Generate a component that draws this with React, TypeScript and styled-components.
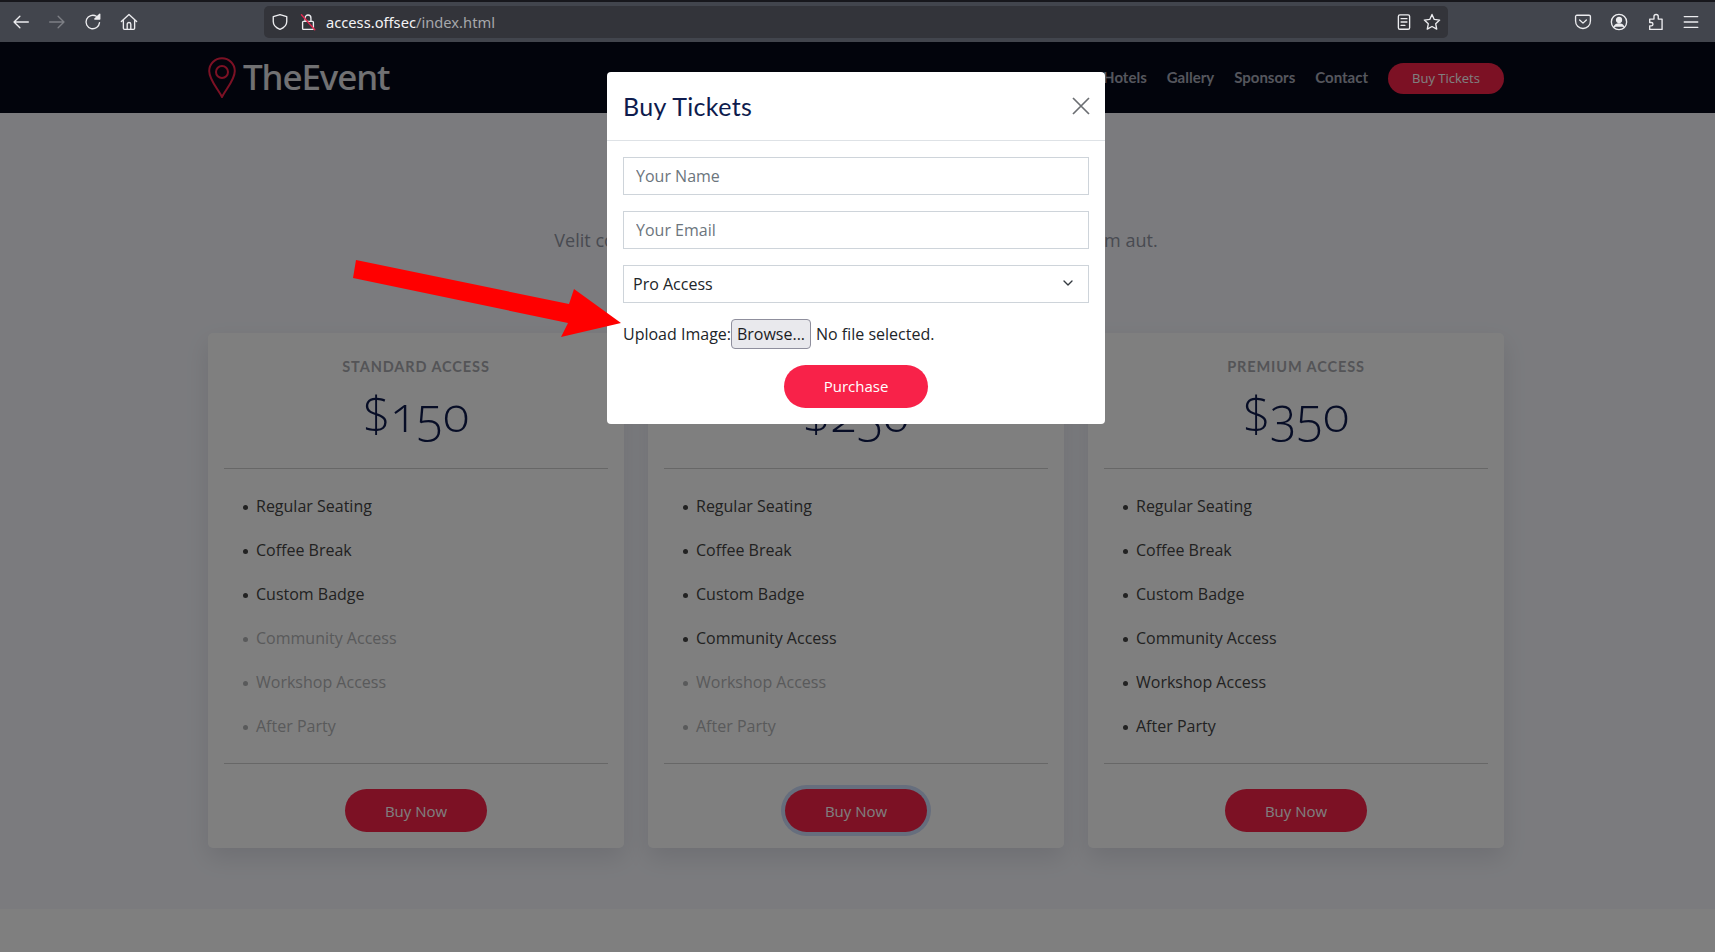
import React from "react";
import styled, { createGlobalStyle } from "styled-components";
import { ChevronDown } from "lucide-react";

const Global = createGlobalStyle`
  html, body { margin: 0; padding: 0; height: 952px; overflow: hidden; background: #fff; }
  body { font-family: "Open Sans", "Liberation Sans", sans-serif; font-size: 16px; color: #444; }
  * { box-sizing: border-box; }
`;

const Shell = styled.div`
  position: relative;
  width: 1715px;
  height: 952px;
  overflow: hidden;
`;

const Toolbar = styled.div`
  height: 42px;
  background: #42454d;
  border-top: 2px solid #17171c;
  display: flex;
  align-items: center;
  padding: 0 7px 0 3px;
`;

const ToolButton = styled.span<{ $w?: number }>`
  width: ${(p) => p.$w ?? 36}px;
  height: 32px;
  display: flex;
  align-items: center;
  justify-content: center;
  flex: none;
`;

const NavGroup = styled.div`
  display: flex;
  width: 261px;
  flex: none;
`;

const UrlBar = styled.div`
  width: 1184px;
  height: 32px;
  background: #33343a;
  border-radius: 5px;
  display: flex;
  align-items: center;
  padding: 0 2px 0 6px;
  flex: none;
`;

const UrlText = styled.div`
  font-family: "Noto Sans", "Open Sans", sans-serif;
  font-size: 14.7px;
  color: #f3f3f5;
  flex: 1;
`;

const UrlDim = styled.span`
  color: #a6a7ab;
`;

const RightGroup = styled.div`
  display: flex;
  margin-left: auto;
`;

const Glyph = styled.svg<{ $dim?: boolean }>`
  width: 18px;
  height: 18px;
  fill: none;
  stroke: ${(p) => (p.$dim ? "#7d7f85" : "#ececef")};
  stroke-width: 1.2;
  stroke-linecap: round;
  stroke-linejoin: round;
`;

const Page = styled.div`
  position: relative;
  height: 910px;
  width: 1715px;
`;

const Header = styled.header`
  height: 71px;
  background: #040919;
  display: flex;
  justify-content: center;
  padding-right: 3px;
`;

const Container = styled.div`
  width: 1296px;
  display: flex;
  align-items: center;
  justify-content: space-between;
`;

const Brand = styled.div`
  display: flex;
  align-items: center;
  gap: 7px;
`;

const BrandName = styled.span`
  font-family: "Noto Sans", sans-serif;
  font-size: 35px;
  font-weight: 500;
  line-height: 44px;
  letter-spacing: -1.1px;
  color: #e2e2e6;
  margin-top: -2px;
`;

const Nav = styled.nav`
  display: flex;
  align-items: center;
  gap: 20px;
`;

const NavLink = styled.a`
  font-family: "Lato", sans-serif;
  font-weight: 700;
  font-size: 15px;
  margin-top: -1px;
  color: #aaadbb;
`;

const NavCta = styled.a`
  width: 116px;
  height: 31px;
  margin-top: 2px;
  padding-bottom: 2px;
  border-radius: 16px;
  background: #f82249;
  color: #fff;
  font-size: 13px;
  display: flex;
  align-items: center;
  justify-content: center;
`;

const Section = styled.section`
  background: #f6f7fd;
  height: 796px;
  padding: 60px 3px 0 0;
`;

const SectionTitle = styled.h2`
  margin: 0;
  font-family: "Lato", sans-serif;
  font-size: 36px;
  font-weight: 700;
  line-height: 44px;
  text-align: center;
  color: #0e1b4d;
`;

const SectionLead = styled.p`
  margin: 11px 0 81px;
  height: 24px;
  line-height: 24px;
  text-align: center;
  font-size: 18px;
  color: #9195a2;
`;

const CardRow = styled.div`
  width: 1296px;
  margin: 0 auto;
  display: grid;
  grid-template-columns: repeat(3, 416px);
  gap: 24px;
`;

const Card = styled.article`
  height: 515px;
  background: #fff;
  border-radius: 5px;
  box-shadow: 0 10px 25px rgba(6, 12, 34, 0.1);
  padding: 23px 16px 16px;
  display: flex;
  flex-direction: column;
`;

const Tier = styled.h5`
  margin: 0;
  font-family: "Lato", sans-serif;
  font-size: 14.5px;
  line-height: 22px;
  font-weight: 700;
  letter-spacing: 0.9px;
  text-align: center;
  text-transform: uppercase;
  color: #a8a9ae;
`;

const Price = styled.h6`
  margin: 0;
  height: 90px;
  font-family: "Open Sans", sans-serif;
  font-size: 49px;
  line-height: 70px;
  font-weight: 300;
  text-align: center;
  font-feature-settings: "onum" 1;
  color: #0e1b4d;
`;

const Rule = styled.hr`
  margin: 0;
  border: 0;
  height: 1px;
  background: #cfcfcf;
  flex: none;
`;

const Features = styled.ul`
  list-style: none;
  margin: 0;
  padding: 25px 0 5px 19px;
  flex: none;
`;

const Feature = styled.li<{ $muted?: boolean }>`
  height: 24px;
  line-height: 24px;
  margin-bottom: 20px;
  font-size: 16px;
  display: flex;
  align-items: center;
  color: ${(p) => (p.$muted ? "#b3b4b6" : "#444")};
  &::before {
    content: "";
    width: 5px;
    height: 5px;
    margin: 2px 8px 0 0;
    border-radius: 50%;
    background: currentColor;
  }
`;

const BuyRow = styled.div`
  display: flex;
  justify-content: center;
  margin-top: 25px;
`;

const BuyButton = styled.button<{ $focused?: boolean }>`
  width: 142px;
  height: 43px;
  border: 0;
  border-radius: 22px;
  background: #f82249;
  color: #fff;
  font-family: "Open Sans", sans-serif;
  font-size: 15px;
  padding: 1px 0 0;
  box-shadow: ${(p) => (p.$focused ? "0 0 0 4px #cddcfa" : "none")};
`;

const Backdrop = styled.div`
  position: absolute;
  inset: 0;
  background: rgba(0, 0, 0, 0.5);
`;

const Modal = styled.div`
  position: absolute;
  top: 30px;
  left: 607px;
  width: 498px;
  height: 352px;
  background: #fff;
  border-radius: 4px;
  display: flex;
  flex-direction: column;
`;

const ModalHead = styled.div`
  height: 69px;
  border-bottom: 1px solid #dee2e6;
  padding: 0 15px 0 16px;
  display: flex;
  align-items: center;
  justify-content: space-between;
  flex: none;
`;

const ModalTitle = styled.h4`
  margin: -1px 0 0;
  font-family: "Lato", sans-serif;
  font-weight: 400;
  font-size: 25px;
  letter-spacing: 0.35px;
  color: #0e1b4d;
`;

const CloseIcon = styled.svg`
  width: 18px;
  height: 18px;
  stroke: #6b6e72;
  stroke-width: 1.7;
  fill: none;
`;

const ModalForm = styled.form`
  padding: 16px;
  display: flex;
  flex-direction: column;
`;

const TextField = styled.input`
  height: 38px;
  width: 100%;
  margin-bottom: 16px;
  padding: 0 12px;
  border: 1px solid #ced4da;
  background: #fff;
  font-family: "Open Sans", sans-serif;
  font-size: 16px;
  &::placeholder { color: #6c757d; opacity: 1; }
`;

const SelectWrap = styled.div`
  position: relative;
  margin-bottom: 16px;
  height: 38px;
`;

const SelectField = styled.select`
  appearance: none;
  height: 38px;
  width: 100%;
  padding: 0 9px;
  border: 1px solid #ced4da;
  border-radius: 0;
  background: #fff;
  color: #212529;
  font-family: "Open Sans", sans-serif;
  font-size: 16px;
`;

const SelectChevron = styled.span`
  position: absolute;
  right: 13px;
  top: 10px;
  display: flex;
  color: #343a40;
`;

const FileRow = styled.div`
  display: flex;
  align-items: center;
  height: 30px;
  color: #212529;
  font-size: 16px;
  margin-bottom: 16px;
`;

const BrowseButton = styled.button`
  width: 80px;
  height: 30px;
  padding: 0;
  margin: 0 5px 0 0;
  background: #e9e9ed;
  border: 1px solid #8f8f9d;
  border-radius: 4px;
  color: #1b1b1f;
  font-family: "Open Sans", sans-serif;
  font-size: 16px;
`;

const PurchaseRow = styled.div`
  display: flex;
  justify-content: center;
`;

const PurchaseButton = styled.button`
  width: 144px;
  height: 43px;
  border: 0;
  border-radius: 22px;
  padding: 0 0 2px;
  background: #f82249;
  color: #fff;
  font-family: "Open Sans", sans-serif;
  font-size: 15px;
`;

const Annotation = styled.svg`
  position: absolute;
  left: 0;
  top: 0;
  width: 1715px;
  height: 952px;
  pointer-events: none;
`;

const features = ["Regular Seating", "Coffee Break", "Custom Badge", "Community Access", "Workshop Access", "After Party"];
const plans = [
  { tier: "Standard Access", price: "$150", on: 3 },
  { tier: "Pro Access", price: "$250", on: 4, focused: true },
  { tier: "Premium Access", price: "$350", on: 6 },
];
const navItems = ["Home", "About", "Speakers", "Schedule", "Venue", "Hotels", "Gallery", "Sponsors", "Contact"];

export default function App() {
  return (
    <Shell>
      <Global />
      <Toolbar>
        <NavGroup>
          <ToolButton>
            <Glyph viewBox="0 0 16 16"><path d="M14.5 8H1.8M7 2.8 1.8 8 7 13.2" /></Glyph>
          </ToolButton>
          <ToolButton>
            <Glyph $dim viewBox="0 0 16 16"><path d="M1.5 8h12.7M9 2.8 14.2 8 9 13.2" /></Glyph>
          </ToolButton>
          <ToolButton>
            <Glyph viewBox="0 0 16 16"><path d="M13.8 8.6A6 6 0 1 1 11 2.9" /><path d="M14 1v4.400H9.600z" fill="#ececef" /></Glyph>
          </ToolButton>
          <ToolButton>
            <Glyph viewBox="0 0 16 16"><path d="M1.2 7.6 8 1.400l6.800 6.200M3 6.400V13.500a1 1 0 0 0 1 1h8a1 1 0 0 0 1-1V6.400M6.400 14.400V10a1.600 1.600 0 0 1 3.200 0v4.400" /></Glyph>
          </ToolButton>
        </NavGroup>
        <UrlBar>
          <ToolButton $w={20}>
            <Glyph viewBox="0 0 16 16"><path d="M8 1.400 2 3.200v4.400c0 3.200 2.400 5.600 6 7 3.600-1.400 6-3.800 6-7V3.200z" /></Glyph>
          </ToolButton>
          <ToolButton $w={36}>
            <Glyph viewBox="0 0 16 16">
              <path d="M4 7.400h8a.8.8 0 0 1 .8.8v5.600a.8.8 0 0 1-.8.8H4a.8.8 0 0 1-.8-.8V8.200a.8.8 0 0 1 .8-.8zM5.400 7.200V4.400a2.600 2.600 0 0 1 5.200 0v2.800" />
              <path d="M2.200 1.600 14 14.800" stroke="#e22850" strokeWidth="1.300" />
            </Glyph>
          </ToolButton>
          <UrlText>access.offsec<UrlDim>/index.html</UrlDim></UrlText>
          <ToolButton $w={28}>
            <Glyph viewBox="0 0 16 16"><rect x="3" y="1.600" width="10" height="12.800" rx="1.400" /><path d="M5.400 5h5.200M5.400 8h5.200M5.400 11h3.400" /></Glyph>
          </ToolButton>
          <ToolButton $w={28}>
            <Glyph viewBox="0 0 16 16"><path d="m8 1.300 2 4.400 4.800.6-3.500 3.300.9 4.700L8 12l-4.200 2.300.9-4.700L1.200 6.300 6 5.700z" /></Glyph>
          </ToolButton>
        </UrlBar>
        <RightGroup>
          <ToolButton $w={37}>
            <Glyph viewBox="0 0 16 16"><path d="M2.600 2h10.800A1.200 1.200 0 0 1 14.600 3.200V7A6.600 6.600 0 0 1 8 13.800 6.600 6.600 0 0 1 1.400 7V3.200A1.200 1.200 0 0 1 2.600 2zM5 6.200 8 9l3-2.800" /></Glyph>
          </ToolButton>
          <ToolButton $w={36}>
            <Glyph viewBox="0 0 16 16"><circle cx="8" cy="8" r="6.800" /><circle cx="8" cy="6.200" r="2.200" fill="#ececef" /><path d="M3.800 12.200c.8-1.700 2.400-2.400 4.200-2.400s3.400.7 4.200 2.400" fill="#ececef" /></Glyph>
          </ToolButton>
          <ToolButton $w={37}>
            <Glyph viewBox="0 0 16 16"><path d="M2.400 14.600v-3.200h1.400a1.500 1.500 0 0 0 0-3H2.400V5.400h3.800V3.200a1.900 1.900 0 0 1 3.800 0v2.200h3.400v9.200z" /></Glyph>
          </ToolButton>
          <ToolButton $w={34}>
            <Glyph viewBox="0 0 16 16"><path d="M2 3.200h12M2 8h12M2 12.800h12" /></Glyph>
          </ToolButton>
        </RightGroup>
      </Toolbar>

      <Page>
        <Header>
          <Container>
            <Brand>
              <svg width="28" height="41" viewBox="0 0 28 41" fill="none" stroke="#f82249" strokeWidth="2">
                <path d="M14 40C10 32 1.200 23 1.200 14a12.800 12.800 0 0 1 25.600 0C26.800 23 18 32 14 40z" />
                <circle cx="14" cy="15" r="6" />
              </svg>
              <BrandName>TheEvent</BrandName>
            </Brand>
            <Nav>
              {navItems.map((n) => <NavLink key={n}>{n}</NavLink>)}
              <NavCta>Buy Tickets</NavCta>
            </Nav>
          </Container>
        </Header>
        <Section>
          <SectionTitle>Buy Tickets</SectionTitle>
          <SectionLead>Velit consequatur consequatur inventore iste fugit unde omnis eum aut.</SectionLead>
          <CardRow>
            {plans.map((p) => (
              <Card key={p.tier}>
                <Tier>{p.tier}</Tier>
                <Price>{p.price}</Price>
                <Rule />
                <Features>
                  {features.map((f, i) => <Feature key={f} $muted={i >= p.on}>{f}</Feature>)}
                </Features>
                <Rule />
                <BuyRow><BuyButton $focused={p.focused}>Buy Now</BuyButton></BuyRow>
              </Card>
            ))}
          </CardRow>
        </Section>
        <Backdrop />
        <Modal>
          <ModalHead>
            <ModalTitle>Buy Tickets</ModalTitle>
            <CloseIcon viewBox="0 0 18 18"><path d="M1 1l16 16M17 1 1 17" /></CloseIcon>
          </ModalHead>
          <ModalForm>
            <TextField placeholder="Your Name" />
            <TextField placeholder="Your Email" />
            <SelectWrap>
              <SelectField defaultValue="pro">
                <option value="pro">Pro Access</option>
              </SelectField>
              <SelectChevron><ChevronDown size={16} strokeWidth={2} /></SelectChevron>
            </SelectWrap>
            <FileRow>
              Upload Image:
              <BrowseButton type="button">Browse...</BrowseButton>
              No file selected.
            </FileRow>
            <PurchaseRow><PurchaseButton type="button">Purchase</PurchaseButton></PurchaseRow>
          </ModalForm>
        </Modal>
      </Page>
      <Annotation viewBox="0 0 1715 952">
        <polygon points="356,260 353,278 568,323 561,337 621,323 574,289 569,304" fill="#ff0000" />
      </Annotation>
    </Shell>
  );
}
